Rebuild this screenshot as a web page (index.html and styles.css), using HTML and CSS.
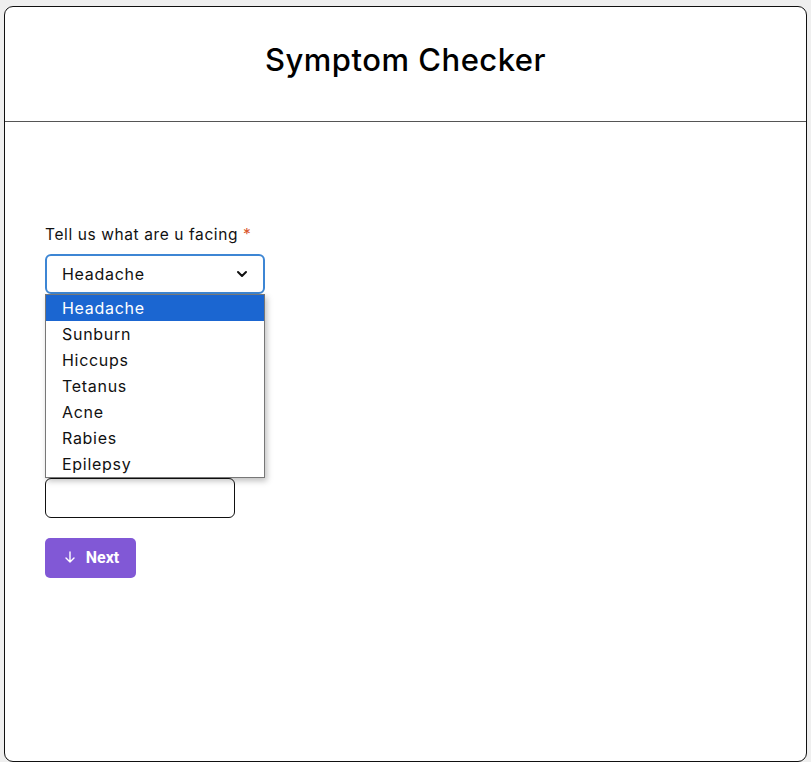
FILE: index.html
```html
<!DOCTYPE html>
<html lang="en">
<head>
<meta charset="utf-8">
<title>Symptom Checker</title>
<link rel="stylesheet" href="styles.css">
</head>
<body>
<div class="card">
  <header class="header">
    <h1 class="title">Symptom Checker</h1>
  </header>
  <main class="form">
    <div class="field">
      <label class="label">Tell us what are u facing <span class="req">*</span></label>
      <div class="select-wrap">
        <div class="select">
          <span class="select-value">Headache</span>
          <svg class="chevron" width="12" height="8" viewBox="0 0 12 8"><path d="M2 2 L6 6 L10 2" fill="none" stroke="#111" stroke-width="2" stroke-linecap="round" stroke-linejoin="round"/></svg>
        </div>
        <ul class="dropdown">
          <li class="option active">Headache</li>
          <li class="option">Sunburn</li>
          <li class="option">Hiccups</li>
          <li class="option">Tetanus</li>
          <li class="option">Acne</li>
          <li class="option">Rabies</li>
          <li class="option">Epilepsy</li>
        </ul>
      </div>
    </div>
    <div class="field second">
      <div class="input"></div>
    </div>
    <button class="btn">
      <svg class="arrow" width="12" height="12" viewBox="0 0 12 12"><path d="M6 1 V11 M2 7 L6 11 L10 7" fill="none" stroke="#fff" stroke-width="1.4" stroke-linecap="round" stroke-linejoin="round"/></svg>
      <span>Next</span>
    </button>
  </main>
</div>
</body>
</html>
```
FILE: styles.css
```css
* { box-sizing: border-box; }
html, body { margin: 0; padding: 0; }
body {
  background: #efefef;
  font-family: "Inter", "DejaVu Sans", sans-serif;
  color: #111;
  padding: 6px 4px 0 4px;
}
.card {
  background: #fff;
  border: 1px solid #111;
  border-radius: 9px;
  height: 756px;
}
.header {
  height: 115px;
  border-bottom: 1px solid #555;
  display: flex;
  align-items: center;
  justify-content: center;
  padding-bottom: 10px;
}
.title {
  margin: 0;
  font-size: 31px;
  font-weight: 500;
  letter-spacing: 0.5px;
  color: #000;
}
.form {
  padding: 102px 40px 0 40px;
}
.field { display: flex; flex-direction: column; }
.label {
  font-size: 15.5px;
  line-height: 22px;
  letter-spacing: 0.6px;
  margin-bottom: 8px;
}
.req { color: #d9552b; }
.select-wrap { position: relative; width: 220px; }
.select {
  height: 40px;
  border: 2px solid #3d86d4;
  border-radius: 6px;
  display: flex;
  align-items: center;
  justify-content: space-between;
  padding: 0 15px 0 15px;
  font-size: 16px;
  letter-spacing: 0.7px;
}
.chevron { display: block; }
.dropdown {
  position: absolute;
  top: 40px;
  left: 0;
  width: 220px;
  margin: 0;
  padding: 0;
  list-style: none;
  background: #fff;
  border: 1px solid #777;
  box-shadow: 2px 3px 6px rgba(0,0,0,0.25);
  z-index: 2;
}
.option {
  height: 26px;
  line-height: 26px;
  padding-left: 16px;
  font-size: 16px;
  letter-spacing: 0.7px;
  color: #111;
}
.option.active {
  background: #1b66d1;
  color: #fff;
}
.second { margin-top: 184px; }
.input {
  width: 190px;
  height: 40px;
  border: 1px solid #111;
  border-radius: 6px;
}
.btn {
  margin-top: 20px;
  width: 91px;
  height: 40px;
  background: #8158d6;
  border: none;
  border-radius: 5px;
  color: #fff;
  font-family: "Roboto", "Liberation Sans", sans-serif;
  font-weight: 700;
  font-size: 16px;
  display: flex;
  align-items: center;
  justify-content: center;
  gap: 10px;
  padding: 0 0 2px 2px;
}
.arrow { display: block; }
```
